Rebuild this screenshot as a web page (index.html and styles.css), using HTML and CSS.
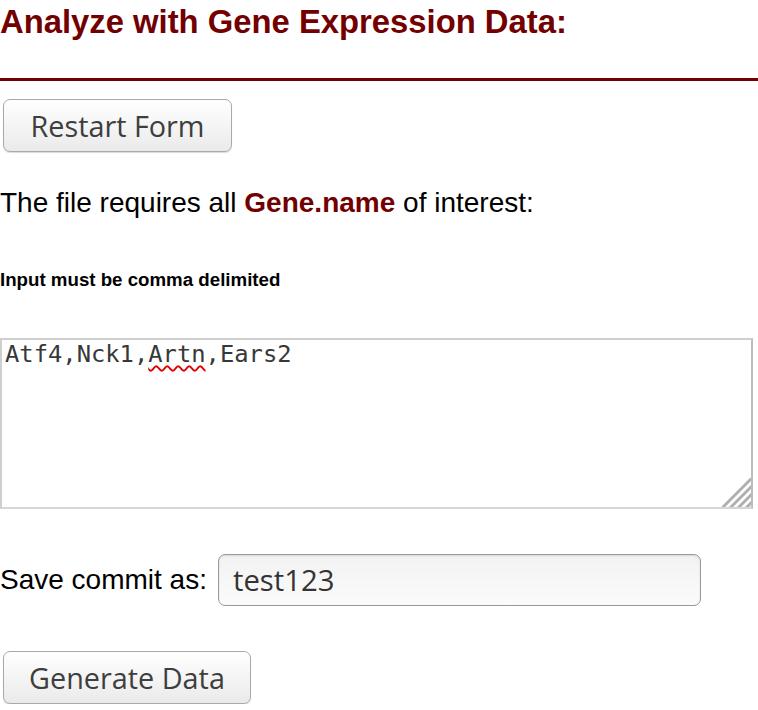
FILE: index.html
```html
<!DOCTYPE html>
<html>
<head>
<meta charset="utf-8">
<link rel="stylesheet" href="styles.css">
</head>
<body>
<main class="page">
  <h1 class="title">Analyze with Gene Expression Data:</h1>
  <hr class="rule">
  <button class="btn btn-restart" type="button">Restart Form</button>
  <p class="lead">The file requires all <strong class="accent">Gene.name</strong> of interest:</p>
  <p class="note">Input must be comma delimited</p>
  <div class="area">
    <div class="area-text">Atf4,Nck1,<span class="misspelled">Artn</span>,Ears2</div>
    <svg class="grip" width="29" height="29" viewBox="0 0 29 29">
      <g stroke="#b0b0b0" stroke-width="3">
        <line x1="30" y1="0" x2="0" y2="30"/>
        <line x1="30" y1="8" x2="8" y2="30"/>
        <line x1="30" y1="16" x2="16" y2="30"/>
        <line x1="30" y1="24" x2="24" y2="30"/>
      </g>
    </svg>
  </div>
  <div class="commit-row">
    <label class="commit-label" for="commit">Save commit as:</label>
    <input class="commit-input" id="commit" type="text" value="test123">
  </div>
  <button class="btn btn-generate" type="button">Generate Data</button>
</main>
</body>
</html>
```
FILE: styles.css
```css
html, body {
  margin: 0;
  padding: 0;
  background: #ffffff;
}

.page {
  display: flex;
  flex-direction: column;
  align-items: flex-start;
  font-family: "Liberation Sans", Arial, sans-serif;
  color: #000;
  width: 758px;
}

.title {
  margin: 3px 0 0 0;
  font-size: 32.8px;
  line-height: 38px;
  font-weight: bold;
  color: #730000;
}

.rule {
  align-self: stretch;
  margin: 37px 0 0 0;
  border: 0;
  height: 3px;
  background: #730000;
}

.btn {
  font-family: "Open Sans", "DejaVu Sans", sans-serif;
  font-size: 28.8px;
  color: #3e3e3e;
  background: linear-gradient(#ffffff, #eaeaea);
  border: 1px solid #a9a9a9;
  border-radius: 7px;
  box-shadow: 0 1px 1px rgba(0,0,0,0.15), inset 0 1px 0 #fff;
  padding: 0;
  margin-left: 3px;
}

.btn-restart {
  margin-top: 18px;
  width: 229px;
  height: 53px;
}

.lead {
  margin: 35px 0 0 0;
  font-size: 28px;
  line-height: 32px;
}

.accent {
  color: #730000;
}

.note {
  margin: 50px 0 0 0;
  font-size: 18.7px;
  line-height: 22px;
  font-weight: bold;
}

.area {
  position: relative;
  margin-top: 47px;
  width: 749px;
  height: 167px;
  border: 2px solid #cfcfcf;
  border-right-color: #bdbdbd;
  border-bottom-color: #d6d6d6;
  background: #fff;
}

.area-text {
  font-family: "DejaVu Sans Mono", monospace;
  font-size: 23.8px;
  line-height: 28px;
  color: #383838;
  padding: 0 3px;
}

.misspelled {
  text-decoration: underline wavy #e00000;
  text-decoration-thickness: 1.6px;
  text-underline-offset: 3px;
}

.grip {
  position: absolute;
  right: 0;
  bottom: 0;
}

.commit-row {
  display: flex;
  align-items: center;
  margin-top: 45px;
  gap: 11px;
}

.commit-label {
  font-size: 28px;
}

.commit-input {
  width: 483px;
  height: 52px;
  box-sizing: border-box;
  border: 1px solid #9a9a9a;
  border-radius: 7px;
  background: linear-gradient(#f2f2f2, #fbfbfb);
  box-shadow: inset 0 1px 2px rgba(0,0,0,0.12);
  font-family: "Open Sans", "DejaVu Sans", sans-serif;
  font-size: 29.3px;
  color: #333;
  padding: 0 14px;
  outline: none;
}

.btn-generate {
  margin-top: 45px;
  width: 248px;
  height: 53px;
}
```
